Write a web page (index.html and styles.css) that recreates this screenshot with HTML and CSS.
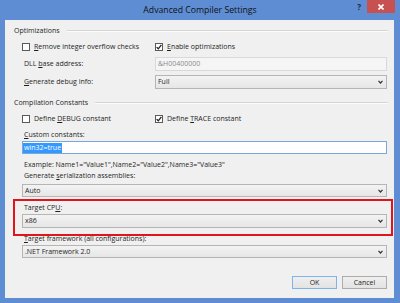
FILE: index.html
```html
<!DOCTYPE html>
<html>
<head>
<meta charset="utf-8">
<link rel="stylesheet" href="styles.css">
</head>
<body>
<div class="window">
  <div class="titlebar">
    <div class="title">Advanced Compiler Settings</div>
    <div class="controls">
      <span class="help">?</span>
      <span class="close"><svg width="6" height="6" viewBox="0 0 6 6"><path d="M0.5 0.5L5.5 5.5M5.5 0.5L0.5 5.5" stroke="#fff" stroke-width="1.6"/></svg></span>
    </div>
  </div>
  <div class="content">
    <div class="group-title g1"><span>Optimizations</span><div class="rule"></div></div>
    <div class="cb-row r1">
      <div class="cb-item"><span class="cb"></span><span><u>R</u>emove integer overflow checks</span></div>
      <div class="cb-item"><span class="cb"><svg width="6" height="6" viewBox="0 0 6 6"><path d="M0.6 3.1L2.3 4.8L5.4 0.8" fill="none" stroke="#222" stroke-width="1.3"/></svg></span><span><u>E</u>nable optimizations</span></div>
    </div>
    <div class="field-row r2">
      <span class="lbl">DLL <u>b</u>ase address:</span>
      <div class="input disabled">&amp;H00400000</div>
    </div>
    <div class="field-row r3">
      <span class="lbl"><u>G</u>enerate debug info:</span>
      <div class="select">Full<svg class="chev" width="5" height="4" viewBox="0 0 5 4"><path d="M0.5 0.8L2.5 3L4.5 0.8" fill="none" stroke="#333" stroke-width="1.2"/></svg></div>
    </div>
    <div class="group-title g2"><span>Compilation Constants</span><div class="rule"></div></div>
    <div class="cb-row r4">
      <div class="cb-item"><span class="cb"></span><span>Define <u>D</u>EBUG constant</span></div>
      <div class="cb-item"><span class="cb"><svg width="6" height="6" viewBox="0 0 6 6"><path d="M0.6 3.1L2.3 4.8L5.4 0.8" fill="none" stroke="#222" stroke-width="1.3"/></svg></span><span>Define <u>T</u>RACE constant</span></div>
    </div>
    <div class="stack">
      <span class="lbl s-custom"><u>C</u>ustom constants:</span>
      <div class="input focus s-input"><span class="sel">win32=true</span></div>
      <span class="lbl s-example">Example: Name1="Value1",Name2="Value2",Name3="Value3"</span>
      <span class="lbl s-gen">Generate <u>s</u>erialization assemblies:</span>
      <div class="select s-auto">Auto<svg class="chev" width="5" height="4" viewBox="0 0 5 4"><path d="M0.5 0.8L2.5 3L4.5 0.8" fill="none" stroke="#333" stroke-width="1.2"/></svg></div>
      <span class="lbl s-cpu">Target CP<u>U</u>:</span>
      <div class="select s-x86">x86<svg class="chev" width="5" height="4" viewBox="0 0 5 4"><path d="M0.5 0.8L2.5 3L4.5 0.8" fill="none" stroke="#333" stroke-width="1.2"/></svg></div>
      <span class="lbl s-fw"><u>T</u>arget framework (all configurations):</span>
      <div class="select s-net">.NET Framework 2.0<svg class="chev" width="5" height="4" viewBox="0 0 5 4"><path d="M0.5 0.8L2.5 3L4.5 0.8" fill="none" stroke="#333" stroke-width="1.2"/></svg></div>
    </div>
    <div class="buttons">
      <button class="btn default">OK</button>
      <button class="btn">Cancel</button>
    </div>
    <div class="highlight"></div>
  </div>
</div>
</body>
</html>
```
FILE: styles.css
```css
* { box-sizing: border-box; }
html, body { margin: 0; padding: 0; }
body {
  width: 400px;
  height: 303px;
  overflow: hidden;
  font-family: "Open Sans", "Noto Sans", sans-serif;
  font-size: 7px;
  line-height: 10px;
  color: #1e1e1e;
}
.window {
  width: 400px;
  height: 303px;
  background: #5f8dd3;
  padding: 0 6px 5px 5px;
  display: flex;
  flex-direction: column;
}
.titlebar {
  height: 20px;
  margin: 0 -6px 0 -5px;
  display: grid;
  grid-template-columns: 1fr auto 1fr;
  align-items: start;
}
.title {
  grid-column: 2;
  font-size: 8.7px;
  line-height: 10px;
  margin-top: 5px;
  color: #111;
}
.controls {
  grid-column: 3;
  justify-self: end;
  display: flex;
  align-items: flex-start;
  padding-right: 5px;
}
.help {
  font-size: 8px;
  font-weight: bold;
  line-height: 10px;
  margin-top: 2px;
  margin-right: 6px;
  color: #1a2a3a;
}
.close {
  width: 28px;
  height: 13px;
  background: #c75050;
  display: flex;
  align-items: center;
  justify-content: center;
}
.content {
  position: relative;
  flex: 1;
  background: #f0f0f0;
  display: flex;
  flex-direction: column;
  padding-right: 7px;
}
.group-title {
  height: 10px;
  display: flex;
  align-items: center;
  padding-left: 9px;
  margin-right: -1px;
}
.group-title .rule {
  flex: 1;
  height: 2px;
  border-top: 1px solid #d5d5d5;
  border-bottom: 1px solid #fcfcfc;
  margin-left: 7px;
}
.g1 { margin-top: 6px; }
.g2 { margin-top: 9px; }
.cb-row {
  height: 10px;
  display: grid;
  grid-template-columns: 133px 1fr;
  padding-left: 17px;
  align-items: center;
}
.r1 { margin-top: 6px; }
.r4 { margin-top: 6px; }
.cb-item { display: flex; align-items: center; gap: 4px; }
.cb {
  width: 8px;
  height: 8px;
  border: 1px solid #5a5a5a;
  background: #fff;
  display: flex;
  align-items: center;
  justify-content: center;
}
.field-row {
  display: grid;
  grid-template-columns: 133px 1fr;
  padding-left: 17px;
  align-items: center;
}
.r2 { margin-top: 5px; height: 14px; }
.r3 { margin-top: 4px; height: 14px; }
.lbl { padding-left: 2px; height: 10px; white-space: nowrap; }
.input {
  height: 14px;
  background: #fff;
  border: 1px solid #abadb3;
  padding-left: 2px;
  display: flex;
  align-items: center;
}
.input.disabled {
  background: #f5f5f5;
  border-color: #d9d9d9;
  color: #8a8a8a;
}
.input.focus { border-color: #7aa7d6; padding-left: 0; }
.sel {
  background: #3399ff;
  color: #fff;
  height: 10px;
  padding: 0 1px;
}
.select {
  height: 14px;
  background: linear-gradient(#f3f3f3, #e6e6e6);
  border: 1px solid #b5b5b5;
  padding-left: 2px;
  display: flex;
  align-items: center;
  justify-content: space-between;
  padding-right: 3px;
}
.stack {
  display: flex;
  flex-direction: column;
  padding-left: 17px;
}
.s-custom { margin-top: 6px; }
.s-input { margin-top: 1px; height: 13px; }
.s-example { margin-top: 6px; }
.s-gen { margin-top: 1px; }
.s-auto { margin-top: 3px; height: 13px; }
.s-cpu { margin-top: 6px; }
.s-x86 { margin-top: 1px; height: 14px; }
.s-fw { margin-top: 6px; }
.s-net { margin-top: 1px; height: 13px; }
.buttons {
  margin-top: 18px;
  display: flex;
  justify-content: flex-end;
  gap: 5px;
}
.btn {
  width: 45px;
  height: 13px;
  font: inherit;
  color: #1e1e1e;
  padding: 0;
  background: linear-gradient(#efefef, #e3e3e3);
  border: 1px solid #acacac;
  line-height: 10px;
}
.btn.default { border-color: #7eb4ea; }
.highlight {
  position: absolute;
  left: 8px;
  top: 179px;
  width: 380px;
  height: 37px;
  border: 2px solid #e3131b;
}
```
